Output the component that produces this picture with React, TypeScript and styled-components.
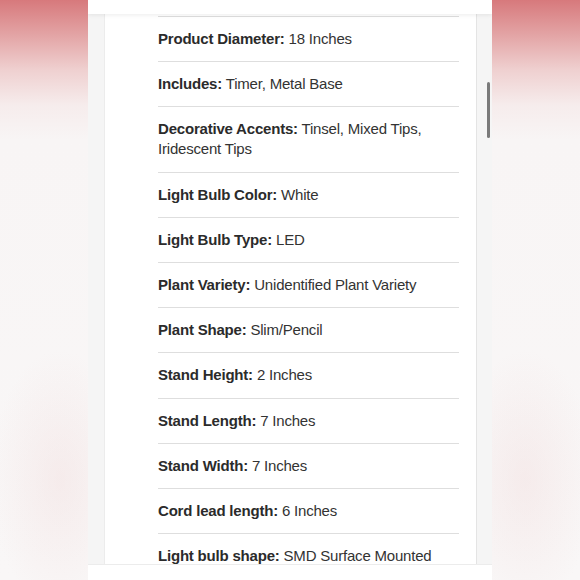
import React from "react";
import styled, { createGlobalStyle } from "styled-components";

type Spec = { label: string; value: string };

const specs: Spec[] = [
  { label: "Product Diameter:", value: "18 Inches" },
  { label: "Includes:", value: "Timer, Metal Base" },
  { label: "Decorative Accents:", value: "Tinsel, Mixed Tips, Iridescent Tips" },
  { label: "Light Bulb Color:", value: "White" },
  { label: "Light Bulb Type:", value: "LED" },
  { label: "Plant Variety:", value: "Unidentified Plant Variety" },
  { label: "Plant Shape:", value: "Slim/Pencil" },
  { label: "Stand Height:", value: "2 Inches" },
  { label: "Stand Length:", value: "7 Inches" },
  { label: "Stand Width:", value: "7 Inches" },
  { label: "Cord lead length:", value: "6 Inches" },
  { label: "Light bulb shape:", value: "SMD Surface Mounted" },
];

const GlobalStyle = createGlobalStyle`
  html, body {
    margin: 0;
    padding: 0;
  }
  body {
    width: 580px;
    height: 580px;
    overflow: hidden;
    font-family: "Liberation Sans", Arial, sans-serif;
    background:
      radial-gradient(ellipse 70px 130px at 60px 480px, rgba(240, 218, 218, 0.4), transparent),
      radial-gradient(ellipse 70px 130px at 525px 480px, rgba(240, 218, 218, 0.4), transparent),
      linear-gradient(
        to bottom,
        #d7797c 0px,
        #e3a4a5 35px,
        #efd0d0 70px,
        #f6ecec 105px,
        #f8f5f5 140px,
        #f9f7f7 100%
      );
  }
`;

const Page = styled.div`
  display: flex;
  justify-content: center;
  width: 580px;
  height: 580px;
`;

const Column = styled.div`
  width: 404px;
  height: 580px;
  display: flex;
  flex-direction: column;
  background: #f5f5f5;
  overflow: hidden;
`;

const TopBar = styled.div`
  height: 14px;
  flex-shrink: 0;
  background: #fff;
  box-shadow: 0 1px 4px rgba(0, 0, 0, 0.08);
  position: relative;
  z-index: 2;
`;

const Body = styled.div`
  flex: 1;
  display: flex;
  min-height: 0;
`;

const Gutter = styled.div<{ $w: number }>`
  width: ${(p) => p.$w}px;
  flex-shrink: 0;
  background: #f5f5f5;
  position: relative;
`;

const Thumb = styled.div`
  position: absolute;
  left: 10px;
  top: 68px;
  width: 3px;
  height: 56px;
  border-radius: 2px;
  background: #7a7a7a;
`;

const Panel = styled.div`
  flex: 1;
  background: #fff;
  border-left: 1px solid #ececec;
  border-right: 1px solid #e4e4e4;
  padding: 2px 17px 0 53px;
  overflow: hidden;
`;

const Row = styled.div`
  border-top: 1px solid #dedede;
  padding: 12.1px 0;
  font-size: 15px;
  line-height: 20px;
  letter-spacing: -0.2px;
  color: #333;
`;

const Label = styled.span`
  font-weight: 700;
  color: #2b2b2b;
`;

const BottomBar = styled.div`
  height: 15px;
  flex-shrink: 0;
  background: #fff;
  border-top: 1px solid #ececec;
`;

export default function App() {
  return (
    <>
      <GlobalStyle />
      <Page>
        <Column>
          <TopBar />
          <Body>
            <Gutter $w={16} />
            <Panel>
              {specs.map((s) => (
                <Row key={s.label}>
                  <Label>{s.label}</Label> {s.value}
                </Row>
              ))}
            </Panel>
            <Gutter $w={15}>
              <Thumb />
            </Gutter>
          </Body>
          <BottomBar />
        </Column>
      </Page>
    </>
  );
}
